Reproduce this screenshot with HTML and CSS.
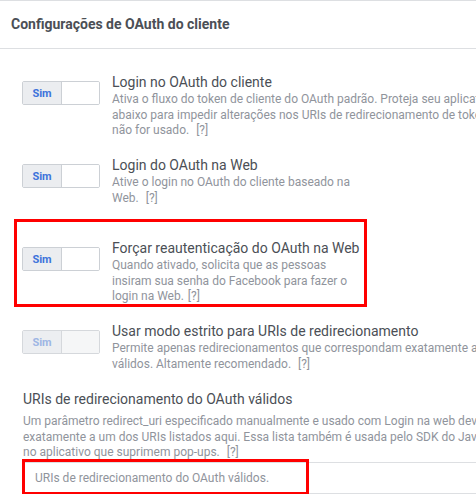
FILE: index.html
```html
<!DOCTYPE html>
<html lang="pt-BR">
<head>
<meta charset="utf-8">
<link rel="stylesheet" href="styles.css">
</head>
<body>
<div class="panel">
  <div class="header">Configurações de OAuth do cliente</div>
  <div class="rows">
    <div class="row">
      <div class="toggle"><span class="sim">Sim</span><span class="off"></span></div>
      <div class="text">
        <div class="title">Login no OAuth do cliente</div>
        <div class="desc">
          <span class="line">Ativa o fluxo do token de cliente do OAuth padrão. Proteja seu aplicativo e permita o acesso</span>
          <span class="line">abaixo para impedir alterações nos URIs de redirecionamento de token permitidos se</span>
          <span class="line">não for usado. <span class="help wide">[?]</span></span>
        </div>
      </div>
    </div>
    <div class="row">
      <div class="toggle"><span class="sim">Sim</span><span class="off"></span></div>
      <div class="text">
        <div class="title">Login do OAuth na Web</div>
        <div class="desc">
          <span class="line">Ative o login no OAuth do cliente baseado na</span>
          <span class="line">Web. <span class="help wide">[?]</span></span>
        </div>
      </div>
    </div>
    <div class="row">
      <div class="mark mark-row"></div>
      <div class="toggle"><span class="sim">Sim</span><span class="off"></span></div>
      <div class="text">
        <div class="title">Forçar reautenticação do OAuth na Web</div>
        <div class="desc">
          <span class="line">Quando ativado, solicita que as pessoas</span>
          <span class="line">insiram sua senha do Facebook para fazer o</span>
          <span class="line">login na Web. <span class="help">[?]</span></span>
        </div>
      </div>
    </div>
    <div class="row last">
      <div class="toggle disabled"><span class="sim">Sim</span><span class="off"></span></div>
      <div class="text">
        <div class="title">Usar modo estrito para URIs de redirecionamento</div>
        <div class="desc">
          <span class="line">Permite apenas redirecionamentos que correspondam exatamente aos URIs de redirecionamento</span>
          <span class="line">válidos. Altamente recomendado. <span class="help wide">[?]</span></span>
        </div>
      </div>
    </div>
  </div>
  <div class="section">
    <div class="section-title">URIs de redirecionamento do OAuth válidos</div>
    <div class="desc">
      <span class="line">Um parâmetro redirect_uri especificado manualmente e usado com Login na web deve corresponder</span>
      <span class="line">exatamente a um dos URIs listados aqui. Essa lista também é usada pelo SDK do JavaScript para navegadores</span>
      <span class="line">no aplicativo que suprimem pop-ups. <span class="help wide">[?]</span></span>
    </div>
    <div class="input-wrap">
      <div class="mark mark-input"></div>
      <div class="input">URIs de redirecionamento do OAuth válidos.</div>
    </div>
  </div>
</div>
</body>
</html>
```
FILE: styles.css
```css
* { box-sizing: border-box; }
html, body {
  margin: 0;
  padding: 0;
  background: #fff;
  overflow: hidden;
}
body {
  font-family: Roboto, "Liberation Sans", Arial, sans-serif;
  color: #4b4f56;
}
.panel {
  width: 476px;
  border-top: 1px solid #dddfe2;
  overflow: hidden;
}
.header {
  height: 48px;
  border-bottom: 1px solid #dddfe2;
  padding-left: 11px;
  display: flex;
  align-items: center;
  font-size: 14px;
  font-weight: 700;
  color: #4b4f56;
  padding-bottom: 2px;
}
.rows {
  padding-top: 23px;
  display: flex;
  flex-direction: column;
  gap: 15px;
}
.row {
  position: relative;
  display: flex;
  gap: 12px;
  padding-left: 22px;
  min-height: 68px;
}
.row.last { min-height: 51px; }
.text { flex: none; }
.title {
  font-size: 14px;
  line-height: 20px;
  color: #4b4f56;
  white-space: nowrap;
}
.desc {
  font-size: 12px;
  line-height: 15.5px;
  color: #90949c;
}
.line {
  display: block;
  white-space: nowrap;
}
.help { margin-left: 1px; }
.help.wide { margin-left: 4px; }
.toggle {
  flex: none;
  width: 78px;
  height: 24px;
  margin-top: 9px;
  border: 1px solid #ccd0d5;
  border-radius: 2px;
  display: flex;
  overflow: hidden;
}
.toggle .sim {
  width: 39px;
  background: #ebedf0;
  border-right: 1px solid #ccd0d5;
  color: #3d74db;
  font-size: 11px;
  font-weight: 700;
  display: flex;
  align-items: center;
  justify-content: center;
}
.toggle .off { flex: 1; background: #fff; }
.toggle.disabled .sim { color: #9db6e4; background: #eceef1; border-right-color: #d5d8dc; }
.toggle.disabled .off { background: #f5f6f7; }
.toggle.disabled { border-color: #d5d8dc; }
.section {
  padding-left: 23px;
  padding-top: 17px;
}
.section-title {
  font-size: 14px;
  line-height: 20px;
  margin-bottom: 5px;
  color: #4b4f56;
}
.input-wrap {
  position: relative;
  margin-top: 1px;
  margin-left: -1px;
}
.input {
  height: 32px;
  border: 1px solid #dddfe2;
  border-right: none;
  padding-left: 12px;
  display: flex;
  align-items: center;
  font-size: 12px;
  color: #90949c;
}
.mark {
  position: absolute;
  border: 3px solid #f00;
  pointer-events: none;
}
.mark-row {
  left: 14px;
  top: -19px;
  width: 353px;
  height: 88px;
}
.mark-input {
  left: 0;
  top: -3px;
  width: 287px;
  height: 36px;
  z-index: 1;
}
```
